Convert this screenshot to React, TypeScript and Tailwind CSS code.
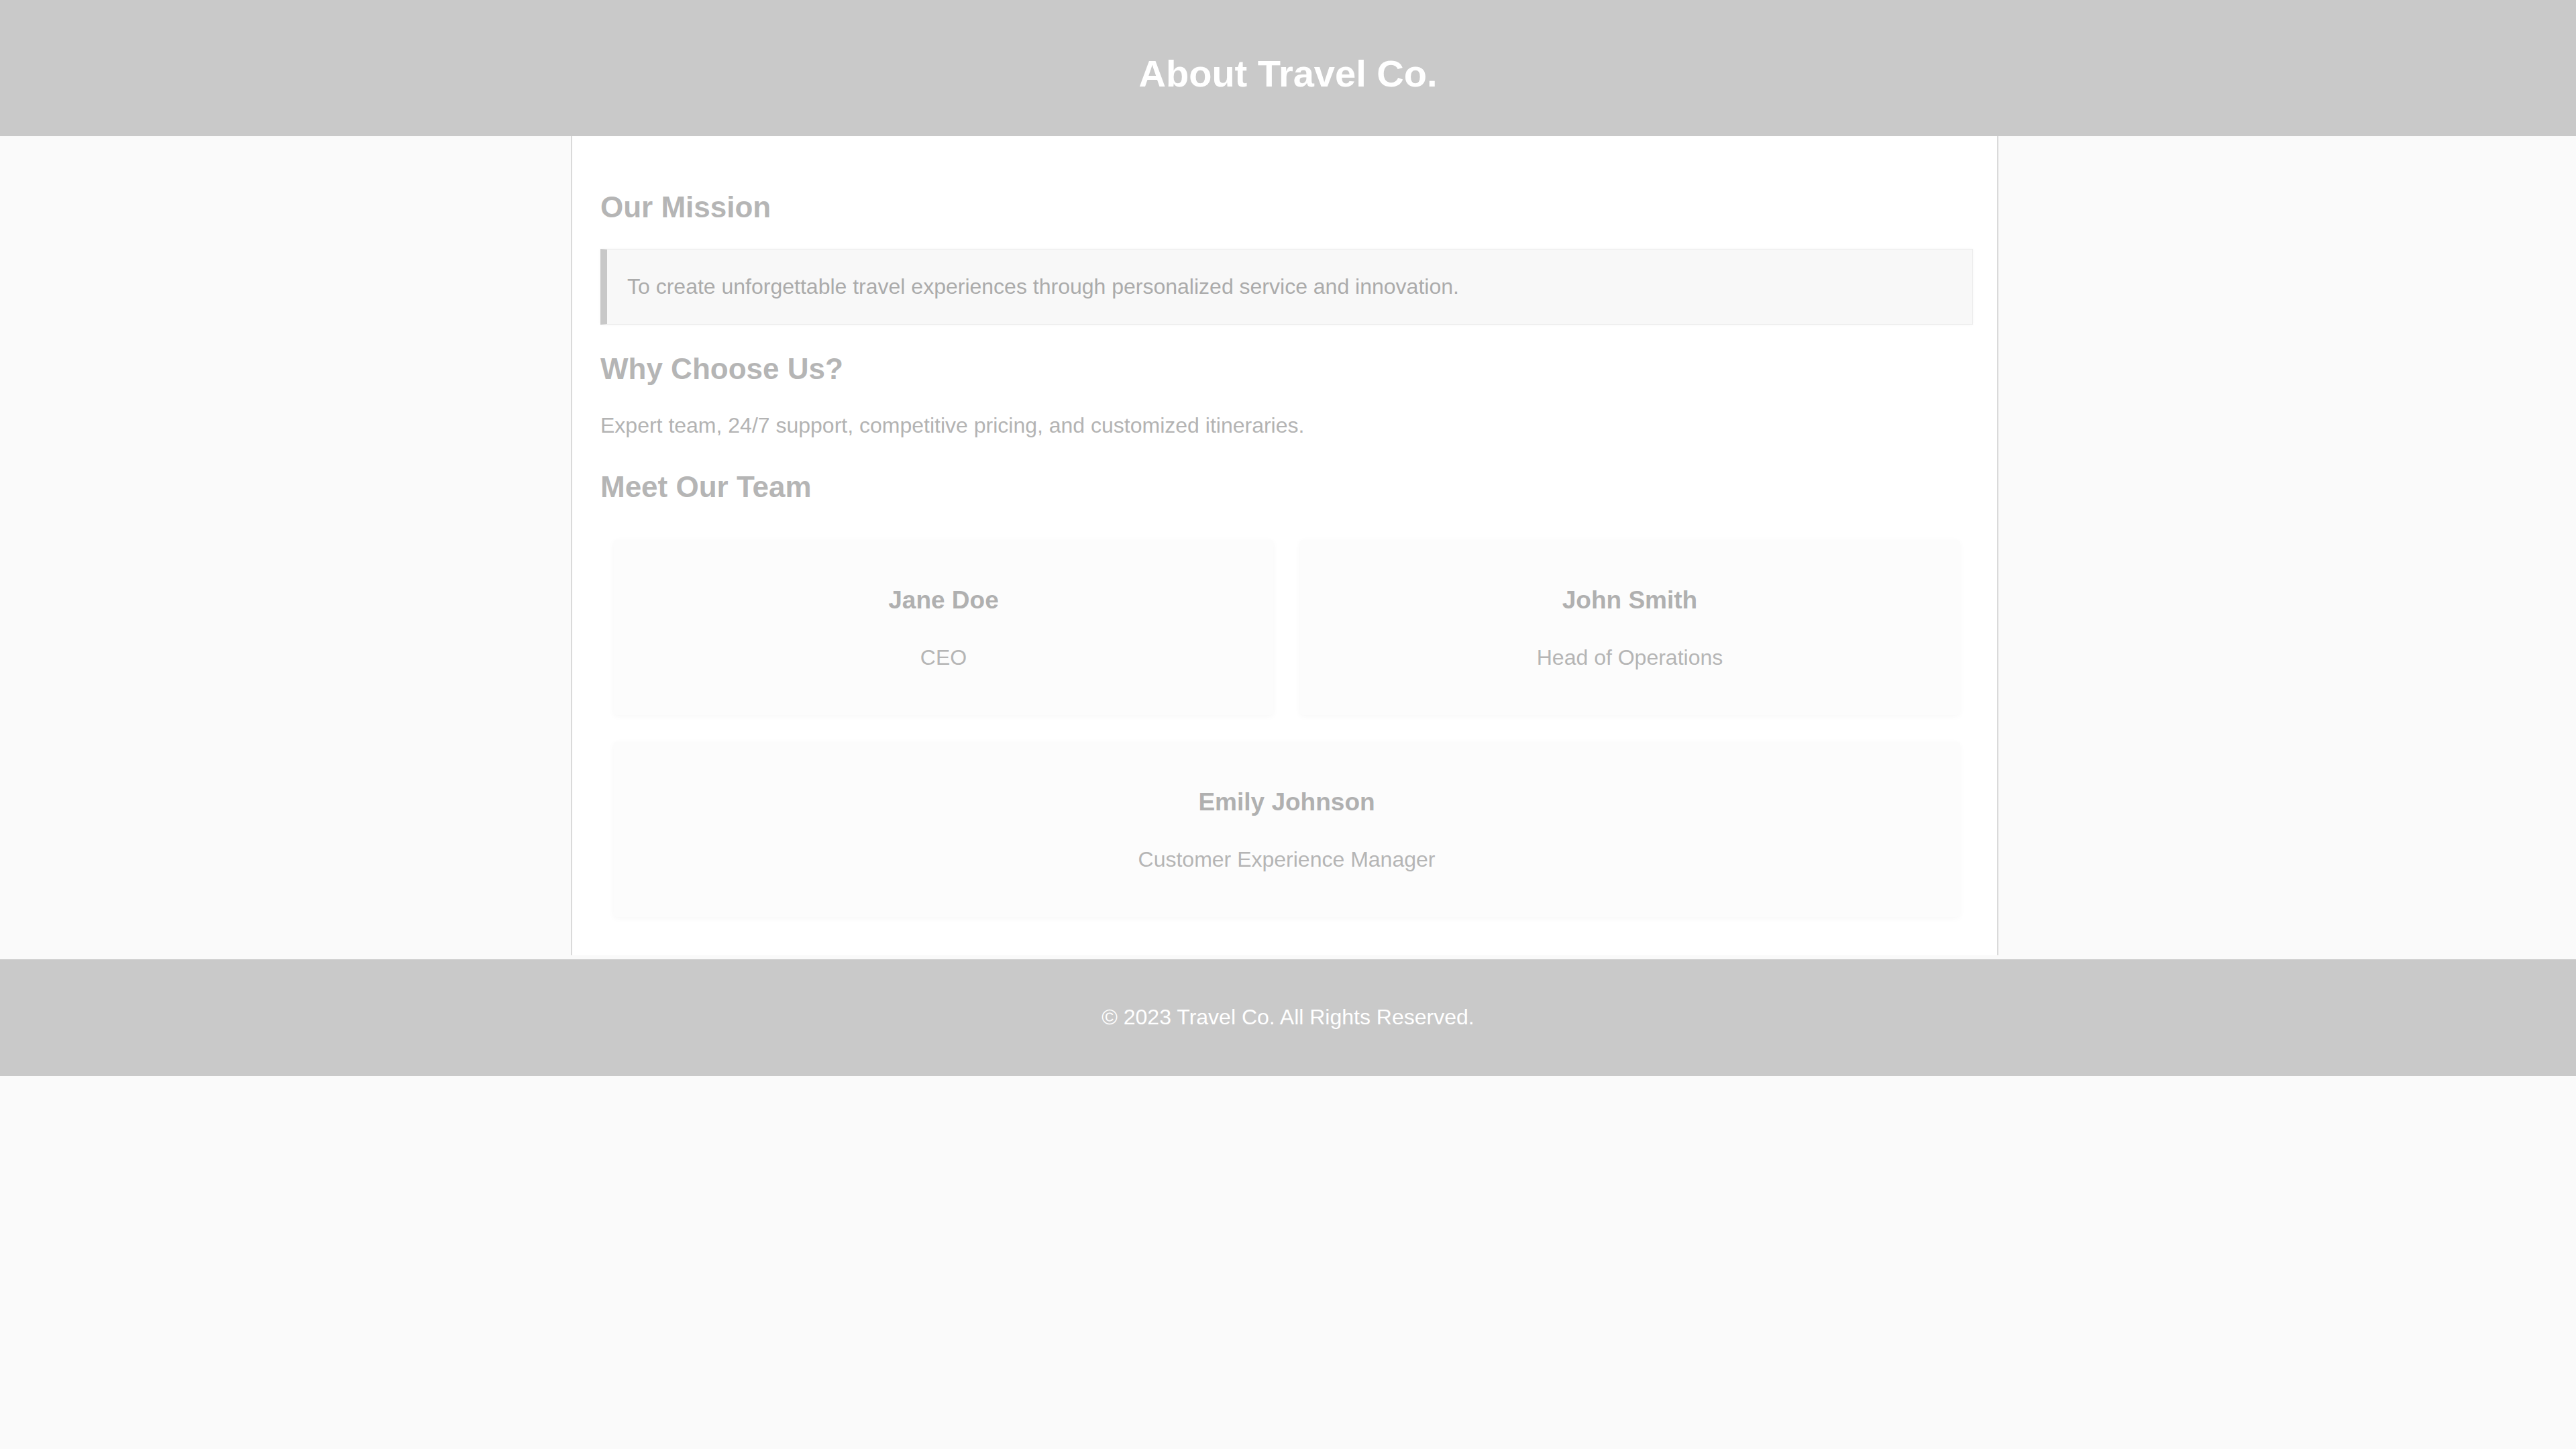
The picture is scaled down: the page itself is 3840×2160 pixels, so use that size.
import React from "react";

const team = [
  { name: "Jane Doe", role: "CEO" },
  { name: "John Smith", role: "Head of Operations" },
  { name: "Emily Johnson", role: "Customer Experience Manager" },
];

export default function App() {
  return (
    <div
      className="min-h-[2160px] w-full bg-[#fafafa]"
      style={{ fontFamily: '"Liberation Sans", Arial, sans-serif' }}
    >
      <header className="h-[203px] bg-[#c9c9c9] pt-[78px] text-center">
        <h1 className="text-[56px] font-bold leading-[64px] text-white">About Travel Co.</h1>
      </header>

      <div className="pr-[10px]">
        <main className="mx-auto mb-[6px] w-[2128px] border-x-2 border-[#dadada] bg-white pl-[42px] pr-[36px] pt-[80px] pb-[37px]">
          <h2 className="text-[44px] font-bold leading-[51px] text-[#b5b5b5]">Our Mission</h2>
          <div className="mt-[37px] border border-l-[10px] border-[#ececec] border-l-[#c8c8c8] bg-[#f8f8f8] py-[37px] pl-[30px] text-[32px] leading-[37px] text-[#ababab] shadow-[0_0_4px_rgba(0,0,0,0.04)]">
            To create unforgettable travel experiences through personalized service and innovation.
          </div>

          <h2 className="mt-[40px] text-[44px] font-bold leading-[51px] text-[#b5b5b5]">Why Choose Us?</h2>
          <p className="mt-[41px] text-[32px] leading-[37px] text-[#b3b3b3]">
            Expert team, 24/7 support, competitive pricing, and customized itineraries.
          </p>

          <h2 className="mt-[47px] text-[44px] font-bold leading-[51px] text-[#b5b5b5]">Meet Our Team</h2>

          <div className="mt-[34px] flex flex-wrap">
            {team.map((m) => (
              <div
                key={m.name}
                className="m-[20px] flex h-[261px] grow basis-[900px] flex-col items-center justify-center rounded-[4px] bg-[#fcfcfc] shadow-[0_2px_10px_rgba(0,0,0,0.035)]"
              >
                <h3 className="text-[37px] font-bold leading-[43px] text-[#b0b0b0]">{m.name}</h3>
                <p className="mt-[46px] text-[32px] leading-[37px] text-[#b5b5b5]">{m.role}</p>
              </div>
            ))}
          </div>
        </main>
      </div>

      <footer className="h-[174px] bg-[#c9c9c9] pt-[68px] text-center">
        <p className="text-[32px] leading-[37px] text-white">© 2023 Travel Co. All Rights Reserved.</p>
      </footer>
    </div>
  );
}
